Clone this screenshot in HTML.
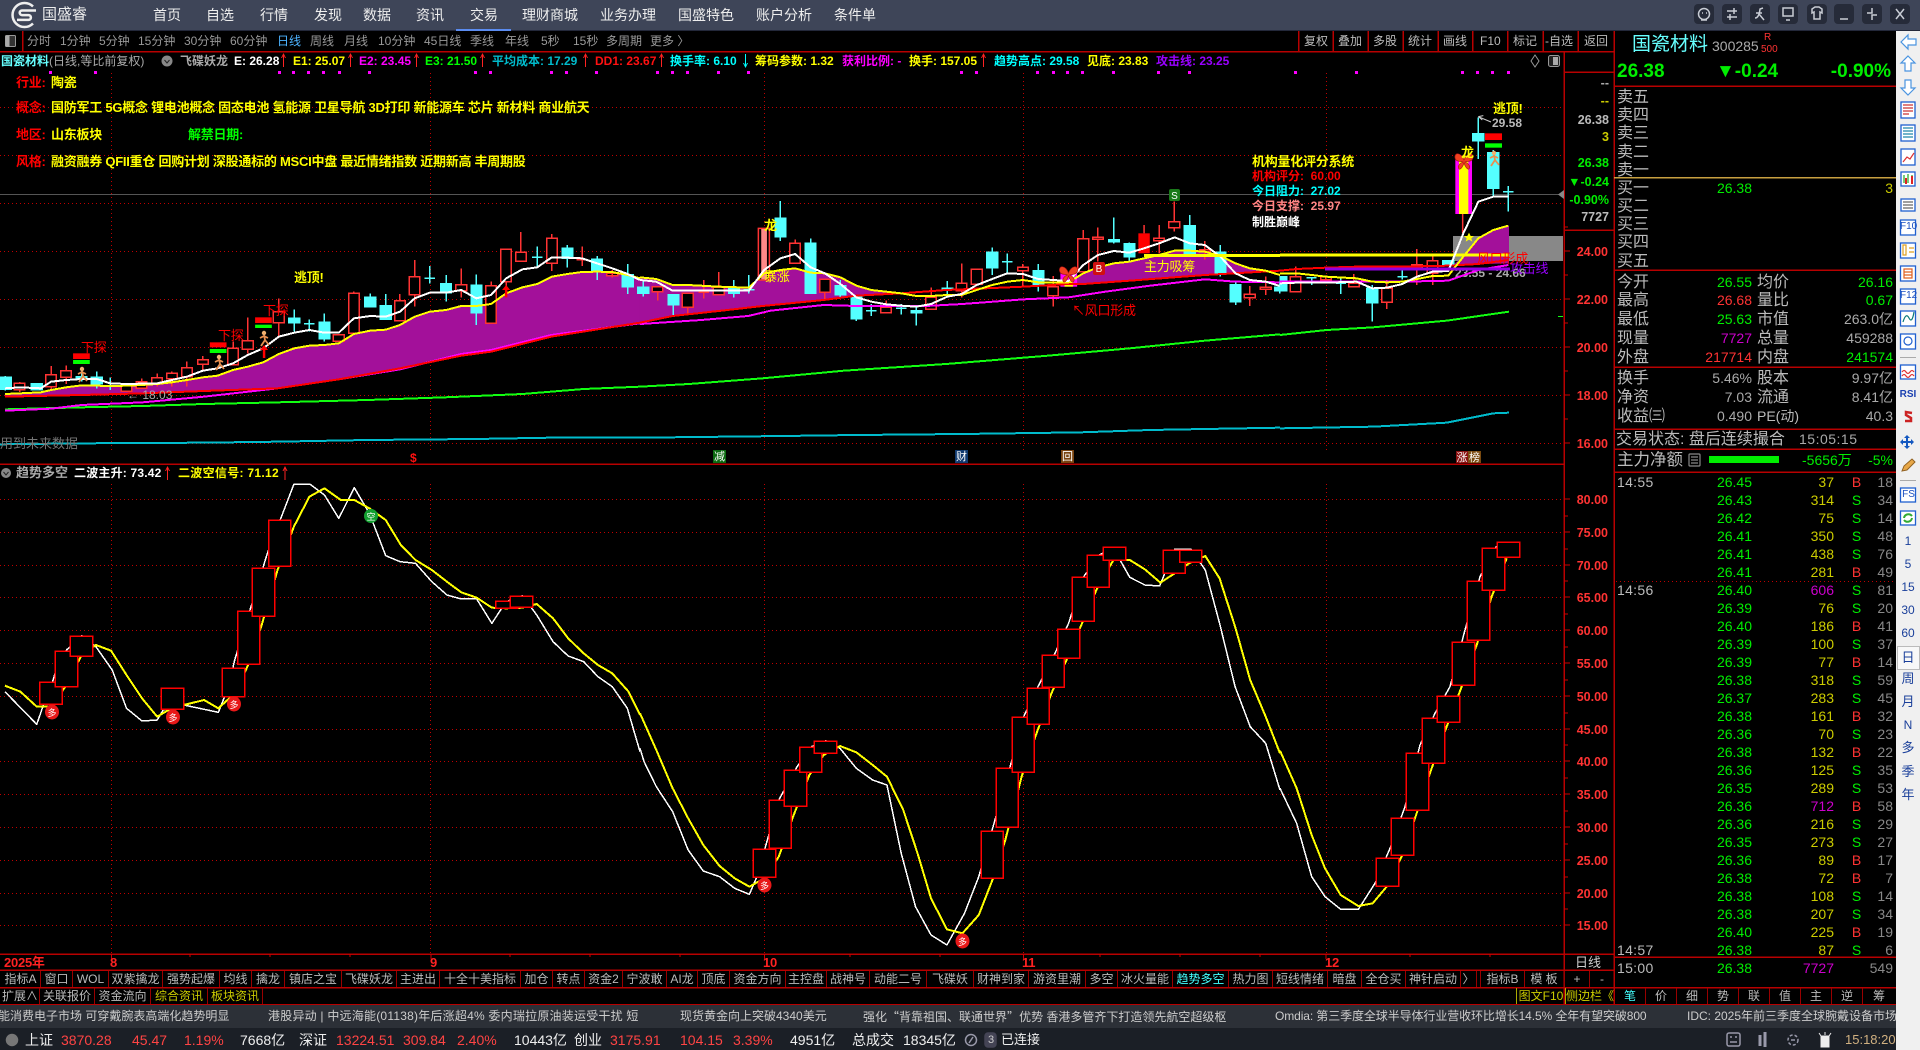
<!DOCTYPE html>
<html lang="zh-CN">
<head>
<meta charset="utf-8">
<title>国盛睿</title>
<style>
html,body{margin:0;padding:0;background:#000}
#p{position:relative;width:1920px;height:1050px;overflow:hidden;background:#000;font-family:"Liberation Sans","Noto Sans CJK SC",sans-serif;color:#bbb}
.a{position:absolute;white-space:nowrap;line-height:16px;height:16px}
.n{font-size:14px;color:#eee}
.k{font-size:12px;color:#999}
.y{font-size:12px;font-weight:bold}
.c{font-size:13px;font-weight:bold;letter-spacing:-.25px}
.c u{display:inline-block;width:35px;text-decoration:none}
.x{font-size:12.5px;font-weight:bold;color:#f33;text-align:right;right:311px}
.l{font-size:16px;color:#bbb}
.v{font-size:14px;text-align:right}
.tb{position:absolute;height:16px;line-height:16px;font-size:12px;color:#bbb;text-align:center;white-space:nowrap;font-weight:normal;overflow:hidden}
.g{font-size:14px}
svg#s{position:absolute;left:0;top:0}
svg#s .f *{vector-effect:non-scaling-stroke}
.R{fill:#000;stroke:#f33;stroke-width:1.5;shape-rendering:crispEdges}
.C{fill:#54ffff;stroke:#54ffff;stroke-width:1.5;shape-rendering:crispEdges}
.pl{fill:none;stroke-width:2;stroke-linejoin:round;shape-rendering:crispEdges}
.W{stroke:#fff}.Y{stroke:#ff0}.D{stroke:#f00}.M{stroke:#f0f}.G{stroke:#1f1}.T{stroke:#0bc}
.lw{stroke-width:1.5}
.bx{fill:#000;stroke:#f00;stroke-width:1.5;shape-rendering:crispEdges}
.col{position:absolute;line-height:18px;font-size:14px;white-space:pre;text-align:right}
.q{font-family:"Noto Sans CJK SC",sans-serif}
</style>
</head>
<body>
<div id="p">
<!-- title bar -->
<div style="position:absolute;left:0;top:0;width:1920px;height:30px;background:#3e4558"></div>
<div style="position:absolute;left:456px;top:29px;width:55px;height:2px;background:#5b8cf0"></div>
<div style="position:absolute;left:0;top:30px;width:456px;height:1px;background:#23283a"></div>
<div style="position:absolute;left:511px;top:30px;width:1409px;height:1px;background:#23283a"></div>

<svg id="s" width="1920" height="1050" viewBox="0 0 1920 1050">
 <!-- logo -->
 <path d="M33 6.500A12 12 0 1 0 33 23.500" fill="none" stroke="#eee" stroke-width="2.500"/>
 <path d="M36 10.500H22a2.300 2.300 0 0 0 0 4.600h6.500a2.400 2.400 0 0 1 0 4.800H17" fill="none" stroke="#eee" stroke-width="2.500"/>
 <!-- window buttons -->
 <g fill="#262b39">
  <rect x="1694" y="4" width="20" height="20" rx="4"/><rect x="1722" y="4" width="20" height="20" rx="4"/><rect x="1750" y="4" width="20" height="20" rx="4"/><rect x="1778" y="4" width="20" height="20" rx="4"/><rect x="1807" y="4" width="20" height="20" rx="4"/><rect x="1834" y="4" width="20" height="20" rx="4"/><rect x="1862" y="4" width="20" height="20" rx="4"/><rect x="1890" y="4" width="20" height="20" rx="4"/>
 </g>
 <g fill="none" stroke="#c8ccd4" stroke-width="1.500">
  <circle cx="1704" cy="14" r="5.500"/><path d="M1701 20h6M1702 13h1M1706 13h1"/>
  <path d="M1727 11h10M1727 17h10M1734 8v6M1730 14v6"/>
  <path d="M1755 18q4 0 5-9l3-1M1756 13h6M1759 14l5 6"/>
  <path d="M1783 8h10v8h-10zM1786 20h4"/>
  <path d="M1812 9l3-2h4l3 2v4l-2-1v7h-6v-7l-2 1z"/>
  <path d="M1840 19h8"/>
  <path d="M1872 8v5h-5M1872 20v-5h5"/>
  <path d="M1896 9l8 10M1904 9l-8 10"/>
 </g>

 <!-- main lines -->
 <g stroke="#b80000" stroke-width="1.500" fill="none" shape-rendering="crispEdges">
  <path d="M0 51.500H1614M0 464H1564M0 954H1614M0 970H1614M0 987.500H1896M0 1004.500H1896M1564 72H1614M1564 230H1614M1614 86H1896M1614 270H1896M1614 367H1896M1614 429H1896M1614 449H1896M1614 472H1896M1614 957H1896M1564 52V1004M1614 31V1004"/>
  <path d="M22.500 31V51"/>
  <path d="M1298.500 31V51M1333 31V51M1368 31V51M1403 31V51M1438 31V51M1472.500 31V51M1507.500 31V51M1543 31V51M1578 31V51"/>
 </g>
 <path d="M1614 177.500H1896" stroke="#c8a040" stroke-width="1.500" shape-rendering="crispEdges"/>
 <!-- axis ticks -->
 <path d="M1564 227h4M1564 251h6M1564 275h4M1564 299h6M1564 323h4M1564 347h6M1564 371h4M1564 395h6M1564 419h4M1564 443h6M1564 499h6M1564 516h4M1564 532h6M1564 549h4M1564 565h6M1564 581h4M1564 597h6M1564 614h4M1564 630h6M1564 647h4M1564 663h6M1564 680h4M1564 696h6M1564 713h4M1564 729h6M1564 745h4M1564 761h6M1564 778h4M1564 794h6M1564 811h4M1564 827h6M1564 844h4M1564 860h6M1564 877h4M1564 893h6M1564 909h4M1564 925h6" stroke="#c00" fill="none" shape-rendering="crispEdges"/>
 <path d="M111.500 954v5M431 954v5M764.500 954v5M1023.500 954v5M1326 954v5M190 954v3M270 954v3M350 954v3M510 954v3M590 954v3M680 954v3M850 954v3M940 954v3M1100 954v3M1180 954v3M1260 954v3M1410 954v3M1490 954v3" stroke="#c00" fill="none" shape-rendering="crispEdges"/>

 <!-- grid -->
 <g stroke="#c00000" fill="none" stroke-dasharray="1 3" shape-rendering="crispEdges">
  <path d="M0 107.500H1563M0 155.500H1563M0 203.500H1563M0 251.500H1563M0 299.500H1563M0 347.500H1563M0 395.500H1563M0 443.500H1563"/>
  <path d="M111.500 73V452M430.500 73V452M764.500 73V452M1023.500 73V452M1326.500 73V452"/>
  <path d="M0 499.500H1563M0 532.500H1563M0 565.500H1563M0 597.500H1563M0 630.500H1563M0 663.500H1563M0 696.500H1563M0 729.500H1563M0 761.500H1563M0 794.500H1563M0 827.500H1563M0 860.500H1563M0 893.500H1563M0 925.500H1563"/>
  <path d="M111.500 484V954M430.500 484V954M764.500 484V954M1023.500 484V954M1326.500 484V954"/>
  <path d="M1616 581.500H1895"/>
 </g>
 <path d="M0 194.500H1560" stroke="#555" stroke-width="1.200" shape-rendering="crispEdges"/>
 <path d="M1564 190l-6 4.500 6 4.500z" fill="#888"/>
 <path d="M1558 316.500h5" stroke="#1f1"/>
 <!-- legend arrows -->
 <g fill="none" stroke-width="1" shape-rendering="crispEdges">
  <path stroke="#f22" d="M283.500 54V67M281.500 58L283.500 54L285.500 58M350.500 54V67M348.500 58L350.500 54L352.500 58M416.500 54V67M414.500 58L416.500 54L418.500 58M482.500 54V67M480.500 58L482.500 54L484.500 58M585.500 54V67M583.500 58L585.500 54L587.500 58M661.500 54V67M659.500 58L661.500 54L663.500 58M983.500 54V67M981.500 58L983.500 54L985.500 58M167.500 467V480M165.500 471L167.500 467L169.500 471M285 467V480M283 471L285 467L287 471"/>
  <path stroke="#0ff" d="M745.500 54V67M743.500 63L745.500 67L747.500 63"/>
 </g>
 <!-- magenta dots -->
 <path d="M49 71h3v3h-3zM94 71h3v3h-3zM278 71h3v3h-3zM292 71h3v3h-3zM307 71h3v3h-3zM322 71h3v3h-3zM338 71h3v3h-3zM368 71h3v3h-3zM474 71h3v3h-3zM489 71h3v3h-3zM550 71h3v3h-3zM565 71h3v3h-3zM595 71h3v3h-3zM656 71h3v3h-3zM671 71h3v3h-3zM686 71h3v3h-3zM717 71h3v3h-3zM747 71h3v3h-3zM960 71h3v3h-3zM975 71h3v3h-3zM1036 71h3v3h-3zM1052 71h3v3h-3zM1066 71h3v3h-3zM1081 71h3v3h-3zM1112 71h3v3h-3zM1157 71h3v3h-3zM1188 71h3v3h-3zM1294 71h3v3h-3zM1355 71h3v3h-3zM1461 71h3v3h-3zM1476 71h3v3h-3zM1491 71h3v3h-3zM1507 71h3v3h-3z" fill="#f0f"/>

 <!-- gray box -->
 <rect x="1453" y="236" width="110" height="25" fill="#888"/>
 <text x="1455" y="277" font-size="12" font-weight="bold" fill="#aaa">23.55 - 24.66</text>

 <!-- TOP frame 1 -->
 <g class="f" transform="translate(0,180) scale(.40816,.33333)">
  <polygon fill="#a3109a" points="12,642 50,640 100,637 125,630 162,622 200,616 237,617 270,618 310,617 347,615 385,612 421,607 458,600 497,592 533,587 571,570 607,560 645,547 683,522 721,505 758,497 795,495 830,490 867,462 907,452 945,449 980,435 1016,410 1053,395 1093,390 1130,378 1167,378 1203,372 1240,340 1280,322 1316,312 1352,290 1390,282 1426,276 1463,275 1500,276 1538,285 1568,295 1568,428 1350,470 1203,515 1130,527 980,565 830,598 680,625 500,633 350,640 200,645 12,650"/>
  <path class="C" d="M13 588V592M13 628V632M0 592H27V628H0Z M90 612V612M90 630V632M77 612H103V630H77Z M200 570V590M200 593V605M187 590H213V593H187Z M237 574V592M237 612V625M224 592H250V612H224Z M270 592V630 M721 388V415M721 428V455M708 415H734V428H708Z M758 418V455M745 432H771 M795 400V427M795 477V485M782 427H808V477H782Z M907 340V352M894 352H920V380H894Z M945 342V378M945 418V420M932 378H958V418H932Z M1053 258V310M1040 295H1066 M1093 285V312M1093 338V365M1080 312H1106V338H1080Z M1167 283V316M1167 398V435M1154 316H1180V398H1154Z M1316 200V260M1303 232H1329 M1390 195V205M1390 235V263M1377 205H1403V235H1377Z M1463 228V238M1463 275V300M1450 238H1476V275H1450Z M1538 252V285M1538 320V342M1525 285H1551V320H1525Z"/>
  <path class="R" d="M48 606V610M48 630V636M35 610H61V630H35Z M125 558V584M125 620V630M112 584H138V620H112Z M162 556V572M162 592V612M149 572H175V592H149Z M310 618V618M297 618H323V634H297Z M347 595V605M334 605H360V625H334Z M385 580V593M385 610V620M372 593H398V610H372Z M421 575V580M421 597V620M408 580H434V597H408Z M458 545V563M458 590V620M445 563H471V590H445Z M497 528V540M497 553V570M484 540H510V553H484Z M571 485V505M558 505H584V555H558Z M607 412V482M607 508V520M594 482H620V508H594Z M683 355V395M683 428V470M670 395H696V428H670Z M830 464V464M817 464H843V484H817Z M867 334V340M854 340H880V460H854Z M980 342V362M967 362H993V422H967Z M1016 240V290M1016 345V380M1003 290H1029V345H1003Z M1130 265V314M1130 332V352M1117 314H1143V332H1117Z M1203 305V317M1190 317H1216V430H1190Z M1240 205V208M1240 305V350M1227 208H1253V305H1227Z M1276 156V217M1263 217H1289V244H1263Z M1352 162V175M1352 250V273M1339 175H1365V250H1339Z M1426 200V258M1413 240H1439 M1500 270V292M1487 280H1513V287H1487Z"/>
  <polyline class="pl T" points="0,793 200,790 500,788 680,785 900,780 1165,777 1350,773 1568,773"/>
  <polyline class="pl G" points="12,688 200,682 350,678 500,672 680,667 900,660 1090,652 1280,642 1430,627 1568,620"/>
  <polyline class="pl M" points="12,692 125,686 200,675 350,667 500,650 680,625 830,598 980,568 1130,522 1203,510 1350,465 1568,430"/>
  <polyline class="pl D" points="12,650 200,645 350,640 500,633 680,625 830,598 980,565 1130,527 1203,515 1350,470 1568,428"/>
  <polyline class="pl Y" points="12,642 50,640 100,637 125,630 162,622 200,616 237,617 270,618 310,617 347,615 385,612 421,607 458,600 497,592 533,587 571,570 607,560 645,547 683,522 721,505 758,497 795,495 830,490 867,462 907,452 945,449 980,435 1016,410 1053,395 1093,390 1130,378 1167,378 1203,372 1240,340 1280,322 1316,312 1352,290 1390,282 1426,276 1463,275 1500,276 1538,285 1568,295"/>
  <polyline class="pl W" points="12,625 50,622 100,625 125,605 162,600 200,597 237,597 270,610 310,612 347,611 385,610 421,600 458,590 497,572 533,565 571,550 607,525 645,505 683,470 721,458 758,450 795,458 830,458 867,415 907,408 945,410 980,395 1016,355 1053,338 1093,338 1130,330 1167,355 1203,345 1240,295 1280,268 1316,262 1352,232 1390,233 1426,235 1463,250 1500,265 1538,282 1568,300"/>
  <g fill="#f00"><rect x="179" y="520" width="41" height="17"/><rect x="514" y="487" width="41" height="15"/><rect x="625" y="412" width="41" height="17"/></g>
  <g fill="#0f0"><rect x="179" y="540" width="41" height="12"/><rect x="514" y="507" width="41" height="12"/><rect x="625" y="434" width="41" height="10"/></g>
  <path d="M647 495l-10 15h7v24h6v-24h7zM1240 315l-10 15h7v22h6v-22h7z" fill="#f00"/>
 </g>

 <!-- TOP frame 2 -->
 <g class="f" transform="translate(640,180) scale(.40816,.33333)">
  <polygon fill="#a3109a" points="0,292 40,297 80,315 117,315 193,320 267,323 304,280 344,270 380,265 418,278 453,280 491,292 530,317 567,330 603,335 640,340 530,347 450,360 300,378 200,392 80,408 0,428"/>
  <polygon fill="#a3109a" points="1070,290 1086,280 1122,262 1161,250 1199,245 1235,235 1272,225 1310,212 1347,212 1384,215 1422,228 1459,250 1494,265 1533,272 1540,274 1384,285 1200,302 1086,312 1070,312"/>
  <path class="C" d="M8 300V322M8 340V350M-5 322H21V340H-5Z M82 345V345M82 375V410M69 345H95V375H69Z M230 300V325M230 340V352M217 325H243V340H217Z M267 285V340M254 330H280 M344 63V115M344 170V183M331 115H357V170H331Z M418 175V190M418 340V342M405 190H431V340H405Z M491 300V318M491 345V352M478 318H504V345H478Z M530 352V352M530 417V423M517 352H543V417H517Z M567 372V408M554 392H580 M640 372V403M627 385H653 M677 380V392M677 398V437M664 392H690V398H664Z M753 303V325M753 330V345M740 325H766V330H740Z M863 202V217M863 263V285M850 217H876V263H850Z M900 220V280M887 245H913 M976 252V273M976 318V335M963 273H989V318H963Z M1161 112V180M1161 185V190M1148 180H1174V185H1148Z M1199 188V192M1199 230V248M1186 192H1212V230H1186Z M1347 105V138M1347 220V222M1334 138H1360V220H1334Z M1422 195V217M1422 280V290M1409 217H1435V280H1409Z M1459 308V315M1459 365V375M1446 315H1472V365H1446Z M1568 305V322M1568 332V340M1555 322H1581V332H1555Z"/>
  <path class="R" d="M43 320V320M43 335V362M30 320H56V335H30Z M117 340V340M117 382V402M104 340H130V382H104Z M156 300V355M143 337H169 M193 276V322M180 322H206V344H180Z M453 298V298M453 337V360M440 298H466V337H440Z M380 178V190M380 250V252M367 190H393V250H367Z M603 362V382M590 382H616V398H590Z M713 322V352M700 352H726V388H700Z M788 250V310M788 333V352M775 310H801V333H775Z M825 268V268M812 268H838V313H812Z M938 252V262M938 272V320M925 262H951V272H925Z M1012 288V320M1012 347V380M999 320H1025V347H999Z M1086 150V177M1073 177H1099V275H1073Z M1122 142V172M1122 178V245M1109 172H1135V178H1109Z M1272 135V175M1272 183V220M1259 175H1285V183H1259Z M1309 65V125M1309 143V155M1296 125H1322V143H1296Z M1384 183V210M1384 215V238M1371 210H1397V215H1371Z M1494 318V343M1494 353V378M1481 343H1507V353H1481Z M1533 290V322M1533 328V345M1520 322H1546V328H1520Z"/>
  <path d="M1235 135V160" stroke="#f33" stroke-width="1.500"/>
  <rect x="1221" y="160" width="28" height="60" fill="#f00"/>
  <rect x="290" y="145" width="27" height="155" fill="#000" stroke="#f33" stroke-width="1.500"/>
  <rect x="297" y="147" width="14" height="151" fill="#f88"/>
  <rect x="1030" y="280" width="41" height="40" fill="#f0f"/><rect x="1040" y="300" width="21" height="20" fill="#ff0"/>
  <polyline class="pl T" points="0,773 350,768 530,765 790,762 1080,757 1250,750 1384,747 1568,743"/>
  <polyline class="pl G" points="0,620 120,612 300,595 500,572 750,552 1000,527 1200,505 1384,482 1568,463"/>
  <polyline class="pl M" points="0,432 150,420 265,408 320,392 450,375 530,378 700,378 790,372 940,358 1050,352 1140,335 1250,317 1384,298 1458,305 1568,307"/>
  <polyline class="pl D" points="0,428 80,408 200,392 300,378 450,360 530,347 640,340 750,330 940,320 1050,312 1086,312 1200,302 1384,285 1568,272"/>
  <polyline class="pl Y" points="0,292 40,297 80,315 117,315 193,320 267,323 304,280 344,270 380,265 418,278 453,280 491,292 530,317 567,330 603,335 640,340 677,348 713,348 753,345 788,345 825,330 863,315 900,305 938,300 976,307 1012,307 1050,307 1086,280 1122,262 1161,250 1199,245 1235,235 1272,225 1310,212 1347,212 1384,215 1422,228 1459,250 1494,265 1533,272 1568,285"/>
  <polyline class="pl W" points="0,300 40,305 80,332 117,332 193,332 267,332 304,270 344,235 380,222 418,262 453,280 491,312 530,352 567,365 603,373 640,377 677,380 713,372 753,350 788,342 825,315 863,297 900,280 938,282 976,297 1012,300 1050,303 1086,255 1122,225 1161,213 1199,218 1235,205 1272,190 1310,172 1347,190 1384,195 1422,230 1459,280 1494,300 1533,305 1568,318"/>
  <path d="M1235 226H1568" stroke="#ff0" stroke-width="3" fill="none" shape-rendering="crispEdges"/>
 </g>

 <!-- TOP frame 3 -->
 <g class="f" transform="translate(1280,100) scale(.33333,.33333)">
  <polygon fill="#a3109a" points="519,495 550,470 595,415 640,390 687,377 687,490 595,492"/>
  <path class="C" d="M0 530H20V572H0Z M95 532V555M80 534H110 M183 530V582M168 550H198 M277 555V565M277 608V665M261 565H293V608H261Z M367 510V538M352 530H382 M505 483V500M489 483H521V498H489Z M595 52V102M595 122V177M579 102H611V122H579Z M640 150V158M640 265V290M624 158H656V265H624Z M685 258V335M669 276H701"/>
  <path class="R" d="M47 500V530M47 575V578M31 530H63V575H31Z M138 530V545M122 530H154V540H122Z M222 522V550M222 560V562M206 550H238V560H206Z M321 540V565M321 607V627M305 565H337V607H305Z M411 447V495M411 503V555M395 495H427V503H395Z M458 470V483M458 520V555M442 483H474V520H442Z"/>
  <path d="M548 342V400" stroke="#f33" stroke-width="1.500"/>
  <rect x="526" y="167" width="50" height="175" fill="#f0f"/><rect x="537" y="167" width="28" height="175" fill="#ff0"/>
  <polyline class="pl T" points="0,985 280,980 500,968 640,940 687,938"/>
  <polyline class="pl G" points="0,705 140,690 280,682 500,662 687,635"/>
  <polyline class="pl M" points="0,545 367,545 505,542 595,510 685,495"/>
  <polyline class="pl D" points="0,512 50,507 138,503 230,500 367,500 505,497 595,492 685,480"/>
  <path d="M0 465H687" stroke="#ff0" stroke-width="3" fill="none" shape-rendering="crispEdges"/>
  <polyline class="pl Y" points="0,520 50,520 95,525 138,530 230,535 277,545 321,547 367,545 411,537 458,528 505,527 550,470 595,415 640,390 685,377"/>
  <polyline class="pl W" points="0,550 50,548 95,548 138,548 230,545 277,565 321,563 367,552 411,530 458,515 505,513 550,400 595,305 640,290 685,290"/>
  <path d="M135 507H690" stroke="#9000e0" stroke-width="3" fill="none" shape-rendering="crispEdges"/>
  <rect x="615" y="100" width="51" height="20" fill="#f00"/><rect x="615" y="130" width="51" height="13" fill="#0f0"/>
  <path d="M595 50l38 16M595 50l12 10M595 50l15-3" stroke="#ccc" fill="none" stroke-width="1"/>
  <path d="M567 398l5 10h10l-8 7 3 10-10-6-10 6 3-10-8-7h10z" fill="#ff0"/>
 </g>

 <!-- Runner icons -->
 <defs><g id="rn"><circle cx="0" cy="-6" r="2.200" fill="#f0b070"/><path d="M0-4L1 1M-4-1L0-3L4-1M1 1L-3 7M1 1L5 6" stroke="#e89050" stroke-width="1.800" fill="none"/></g>
 <g id="bf"><path d="M0 0C-3-8-10-8-9-2C-8 2-4 1-1 2C-4 3-7 6-5 9C-3 10-1 6 0 3C1 6 3 10 5 9C7 6 4 3 1 2C4 1 8 2 9-2C10-8 3-8 0 0Z" fill="#f04020" stroke="#a01010" stroke-width=".6"/></g></defs>
 <use href="#rn" x="82" y="375"/><use href="#rn" x="219" y="363"/><use href="#rn" x="264" y="339"/><use href="#rn" x="1494" y="159"/>
 <use href="#bf" x="1068.500" y="273"/><use href="#bf" x="1464" y="160"/>

 <!-- LOWER frames -->
 <g class="f" transform="translate(0,460) scale(.40816,.33333)">
  <polyline class="pl W lw" points="12,695 90,793 105,740 125,680 135,640 163,570 200,527 235,560 275,630 310,745 348,783 385,780 400,750 450,735 535,757 560,680 575,600 620,420 655,280 720,73 760,73 795,105 830,175 868,83 905,160 945,287 980,305 1018,310 1058,365 1095,405 1130,417 1168,417 1205,490 1240,425 1280,407 1315,465 1355,545 1392,588 1430,605 1465,650 1500,680 1537,745 1568,875"/>
  <polyline class="pl Y" points="12,677 50,695 90,740 125,740 160,680 200,585 235,555 272,572 310,645 348,715 385,770 420,745 460,732 500,720 535,745 575,700 610,610 640,500 680,330 720,200 758,110 795,85 835,120 868,120 905,145 945,180 982,255 1018,300 1058,330 1095,365 1130,397 1168,413 1205,443 1240,445 1280,443 1315,432 1355,475 1392,535 1430,580 1465,615 1500,640 1540,695 1568,765"/>
  <rect class="bx" x="98" y="667" width="55" height="66"/><rect class="bx" x="135" y="574" width="55" height="106"/><rect class="bx" x="172" y="529" width="55" height="60"/><rect class="bx" x="395" y="685" width="55" height="63"/><rect class="bx" x="545" y="625" width="55" height="85"/><rect class="bx" x="582" y="454" width="55" height="159"/><rect class="bx" x="618" y="325" width="55" height="144"/><rect class="bx" x="658" y="181" width="54" height="138"/><rect class="bx" x="1214" y="424" width="54" height="21"/><rect class="bx" x="1250" y="409" width="55" height="33"/>
 </g>
 <g class="f" transform="translate(640,460) scale(.40816,.33333)">
  <polyline class="pl W lw" points="0,865 10,905 40,980 80,1055 118,1170 155,1233 195,1250 232,1285 268,1303 290,1240 305,1170 340,1020 385,920 420,860 455,842 490,865 530,925 570,960 605,975 640,1180 675,1340 713,1425 752,1455 795,1360 830,1250 865,1100 900,950 940,770 975,680 1013,590 1050,490 1087,350 1125,285 1160,265 1200,352 1237,375 1273,378 1310,268 1350,268 1385,330 1420,490 1458,680 1495,800 1533,850 1568,990"/>
  <polyline class="pl Y" points="0,760 40,870 80,985 118,1075 155,1155 195,1218 232,1255 268,1280 305,1255 340,1190 375,1070 415,945 450,885 490,858 530,877 570,915 605,950 645,1050 680,1180 713,1315 752,1408 790,1420 830,1365 865,1255 895,1140 935,950 970,825 1008,700 1045,600 1083,490 1120,385 1160,300 1200,300 1237,328 1275,368 1310,340 1345,310 1385,288 1420,355 1458,500 1495,660 1533,770 1568,880"/>
  <rect class="bx" x="278" y="1168" width="54" height="84"/><rect class="bx" x="317" y="1021" width="54" height="144"/><rect class="bx" x="354" y="931" width="54" height="108"/><rect class="bx" x="391" y="862" width="54" height="75"/><rect class="bx" x="427" y="844" width="55" height="36"/><rect class="bx" x="836" y="1114" width="54" height="141"/><rect class="bx" x="873" y="925" width="54" height="177"/><rect class="bx" x="912" y="772" width="54" height="165"/><rect class="bx" x="949" y="685" width="54" height="108"/><rect class="bx" x="986" y="586" width="54" height="96"/><rect class="bx" x="1023" y="508" width="54" height="87"/><rect class="bx" x="1059" y="352" width="54" height="132"/><rect class="bx" x="1096" y="286" width="54" height="96"/><rect class="bx" x="1135" y="262" width="55" height="39"/><rect class="bx" x="1282" y="271" width="54" height="69"/><rect class="bx" x="1322" y="271" width="54" height="36"/>
 </g>
 <g class="f" transform="translate(1280,460) scale(.33333,.33333)">
  <polyline class="pl W lw" points="0,985 50,1090 95,1250 135,1310 182,1348 235,1348 285,1270 330,1165 375,1040 420,855 465,760 510,680 555,510 600,350 650,258"/>
  <polyline class="pl Y" points="0,872 50,985 95,1125 135,1225 182,1305 235,1338 278,1330 320,1280 365,1190 410,1060 455,925 500,800 545,680 590,555 635,410 680,295"/>
  <rect class="bx" x="289" y="1195" width="67" height="84"/><rect class="bx" x="334" y="1075" width="67" height="111"/><rect class="bx" x="379" y="880" width="67" height="171"/><rect class="bx" x="427" y="775" width="67" height="135"/><rect class="bx" x="472" y="709" width="67" height="78"/><rect class="bx" x="517" y="547" width="67" height="129"/><rect class="bx" x="562" y="364" width="67" height="177"/><rect class="bx" x="607" y="265" width="67" height="126"/><rect class="bx" x="652" y="247" width="67" height="45"/>
 </g>

 <!-- signal markers -->
 <g font-size="9" fill="#fff" text-anchor="middle" font-family="'Liberation Sans','Noto Sans CJK SC',sans-serif">
  <ellipse cx="52" cy="712" rx="7" ry="7.500" fill="#e81818"/><text x="52" y="716">多</text>
  <ellipse cx="173" cy="717" rx="7" ry="7.500" fill="#e81818"/><text x="173" y="721">多</text>
  <ellipse cx="234" cy="704" rx="7" ry="7.500" fill="#e81818"/><text x="234" y="708">多</text>
  <ellipse cx="764.500" cy="885" rx="7" ry="7.500" fill="#e81818"/><text x="764.500" y="889">多</text>
  <ellipse cx="962.500" cy="941" rx="7" ry="7.500" fill="#e81818"/><text x="962.500" y="945">多</text>
  <ellipse cx="371" cy="516" rx="7" ry="7" fill="#12a030"/><text x="371" y="520">空</text>
  <rect x="1093" y="262" width="12" height="13" rx="2" fill="#d01010"/><text x="1099" y="272" font-size="10">B</text>
  <rect x="1169" y="189" width="11" height="12" rx="2" fill="#1a7a1a"/><text x="1174.500" y="199" font-size="10">S</text>
  <rect x="713" y="450" width="13" height="13" fill="#0a6a10"/><text x="719.500" y="460" font-size="11">减</text>
  <rect x="955" y="450" width="13" height="13" fill="#103a70"/><text x="961.500" y="460" font-size="11">财</text>
  <rect x="1061" y="450" width="13" height="13" fill="#7a4410"/><text x="1067.500" y="460" font-size="11">回</text>
  <rect x="1456" y="451" width="12" height="12" fill="#8a1010"/><text x="1462" y="461" font-size="11">涨</text>
  <rect x="1468" y="451" width="13" height="12" fill="#7a4a10"/><text x="1474.500" y="461" font-size="11">榜</text>
 </g>

 <!-- small panel bar -->
 <rect x="1709" y="456" width="70" height="7" fill="#0e0"/>
 <g fill="none" stroke="#888" stroke-width="1.200"><rect x="1689" y="454" width="11" height="12" rx="1"/><path d="M1691 457h7M1691 460h7M1691 463h7"/></g>
 <!-- toolbar icon -->
 <rect x="5.500" y="35.500" width="10" height="11" rx="1" fill="#333" stroke="#999"/>
 <rect x="5.500" y="35.500" width="4" height="11" fill="#aaa"/>
 <!-- legend icons -->
 <circle cx="167" cy="61" r="5.500" fill="#888"/><path d="M164.500 60l2.500 3 2.500-3" stroke="#222" fill="none"/>
 <circle cx="6" cy="473" r="5" fill="#888"/><path d="M3.500 472l2.500 3 2.500-3" stroke="#222" fill="none"/>
 <path d="M1535 55l4 6-4 6-4-6z" fill="none" stroke="#999"/>
 <rect x="1548.500" y="55.500" width="11" height="11" rx="2" fill="#222" stroke="#999"/><rect x="1553" y="57" width="5" height="8" fill="#aaa"/>

 <!-- side bar -->
 <rect x="1896" y="31" width="24" height="1019" fill="#f0f0f0"/>
 <g fill="#fff" stroke="#4a94e0" stroke-width="1.200">
  <path d="M1901 42l7-7v4h8v6h-8v4z"/>
  <path d="M1908 56l7 7h-4v8h-6v-8h-4z"/>
  <path d="M1908 95l7-7h-4v-8h-6v8h-4z"/>
 </g>
 <g fill="#fff" stroke="#2060d0" stroke-width="1.300">
  <rect x="1901" y="102" width="14" height="16"/>
  <rect x="1901" y="125" width="14" height="16"/>
  <rect x="1901" y="149" width="14" height="16"/>
  <rect x="1901" y="172" width="14" height="14"/>
  <rect x="1901" y="199" width="14" height="12"/>
  <rect x="1900.500" y="220" width="15" height="15"/>
  <rect x="1900.500" y="243" width="15" height="15"/>
  <rect x="1900.500" y="266" width="15" height="15"/>
  <rect x="1900.500" y="289" width="15" height="15"/>
  <rect x="1900.500" y="311" width="15" height="15"/>
  <rect x="1900.500" y="334" width="15" height="15"/>
  <rect x="1900.500" y="365" width="15" height="14"/>
  <rect x="1900.500" y="488" width="15" height="14"/>
  <rect x="1900.500" y="511" width="15" height="14" />
 </g>
 <g fill="none" stroke-width="1.200">
  <path d="M1903 105h10M1903 108h10M1903 111h10M1903 114h6" stroke="#c33"/>
  <path d="M1903 128h10M1903 131h10M1903 134h10M1903 137h10" stroke="#28a"/>
  <path d="M1903 162l4-5 3 2 4-6" stroke="#d33"/>
  <path d="M1904 175v8M1908 174v9M1912 175v8" stroke="#2a2"/>
  <path d="M1903 202h10M1903 205h10M1903 208h10" stroke="#666"/>
  <path d="M1903 245h3v10h-3zM1909 248h5M1909 252h5" stroke="#e0a020"/>
  <path d="M1904 269h8v9h-8zM1904 272h8M1904 275h8" stroke="#e06020"/>
  <path d="M1903 322q3-10 6-4t5-6" stroke="#0a7a7a"/>
  <circle cx="1908" cy="341" r="4" stroke="#2060d0"/>
  <path d="M1902 372q2-3 4 0t4 0 4 0M1902 376q2-3 4 0t4 0 4 0" stroke="#d33"/>
  <path d="M1904 518a4.500 4.500 0 0 1 8-2M1912 518a4.500 4.500 0 0 1-8 2" stroke="#3a3" stroke-width="2"/>
 </g>
 <path d="M1905 178h2v6h-2zM1911 176h2v8h-2z" fill="#d22"/>
 <path d="M1900 357.500h16M1900 480.500h16" stroke="#aaa"/>
 <path d="M1912 413l-6-1 0 3 5 3-0 3-6 0" stroke="#c22" stroke-width="2.500" fill="none"/>
 <path d="M1908 442m-8 0l3-3v2h3v-3h-2l3-3 3 3h-2v3h3v-2l3 3-3 3v-2h-3v3h2l-3 3-3-3h2v-3h-3v2z" fill="#1458c0"/>
 <path d="M1902 471l2-5 8-7 3 3-8 8z" fill="#e8a848" stroke="#906020"/>
 <rect x="1897.500" y="646.500" width="22" height="23" fill="#f8f8f8" stroke="#bbb"/>
</svg>

<!-- logo and nav -->
<div class="a" style="left:42px;top:7px;font-size:15px;color:#eee">国盛睿</div>
<div class="a n" style="left:153px;top:7px">首页</div>
<div class="a n" style="left:206px;top:7px">自选</div>
<div class="a n" style="left:260px;top:7px">行情</div>
<div class="a n" style="left:314px;top:7px">发现</div>
<div class="a n" style="left:363px;top:7px">数据</div>
<div class="a n" style="left:416px;top:7px">资讯</div>
<div class="a n" style="left:470px;top:7px">交易</div>
<div class="a n" style="left:522px;top:7px">理财商城</div>
<div class="a n" style="left:600px;top:7px">业务办理</div>
<div class="a n" style="left:678px;top:7px">国盛特色</div>
<div class="a n" style="left:756px;top:7px">账户分析</div>
<div class="a n" style="left:834px;top:7px">条件单</div>

<!-- toolbar -->
<div class="a k" style="left:27px;top:33px">分时</div>
<div class="a k" style="left:60px;top:33px">1分钟</div>
<div class="a k" style="left:99px;top:33px">5分钟</div>
<div class="a k" style="left:138px;top:33px">15分钟</div>
<div class="a k" style="left:184px;top:33px">30分钟</div>
<div class="a k" style="left:230px;top:33px">60分钟</div>
<div class="a k" style="left:277px;top:33px;color:#4db3ff">日线</div>
<div class="a k" style="left:310px;top:33px">周线</div>
<div class="a k" style="left:344px;top:33px">月线</div>
<div class="a k" style="left:378px;top:33px">10分钟</div>
<div class="a k" style="left:424px;top:33px">45日线</div>
<div class="a k" style="left:470px;top:33px">季线</div>
<div class="a k" style="left:505px;top:33px">年线</div>
<div class="a k" style="left:541px;top:33px">5秒</div>
<div class="a k" style="left:573px;top:33px">15秒</div>
<div class="a k" style="left:606px;top:33px">多周期</div>
<div class="a k" style="left:650px;top:33px">更多 〉</div>
<div class="a k" style="left:1304px;top:33px;color:#bbb">复权</div>
<div class="a k" style="left:1338px;top:33px;color:#bbb">叠加</div>
<div class="a k" style="left:1373px;top:33px;color:#bbb">多股</div>
<div class="a k" style="left:1408px;top:33px;color:#bbb">统计</div>
<div class="a k" style="left:1443px;top:33px;color:#bbb">画线</div>
<div class="a k" style="left:1480px;top:33px;color:#bbb">F10</div>
<div class="a k" style="left:1513px;top:33px;color:#bbb">标记</div>
<div class="a k" style="left:1545px;top:33px;color:#bbb">-自选</div>
<div class="a k" style="left:1584px;top:33px;color:#bbb">返回</div>

<!-- legend -->
<div class="a y" style="left:1px;top:53px;color:#6ff">国瓷材料<span style="color:#aaa;font-weight:normal">(日线,等比前复权)</span></div>
<div class="a y" style="left:180px;top:53px;color:#aaa">飞碟妖龙</div>
<div class="a y" style="left:234px;top:53px;color:#fff">E: 26.28</div>
<div class="a y" style="left:293px;top:53px;color:#ff0">E1: 25.07</div>
<div class="a y" style="left:359px;top:53px;color:#f0f">E2: 23.45</div>
<div class="a y" style="left:425px;top:53px;color:#0f0">E3: 21.50</div>
<div class="a y" style="left:492px;top:53px;color:#0bc">平均成本: 17.29</div>
<div class="a y" style="left:595px;top:53px;color:#f11">DD1: 23.67</div>
<div class="a y" style="left:670px;top:53px;color:#0ff">换手率: 6.10</div>
<div class="a y" style="left:755px;top:53px;color:#ff0">筹码参数: 1.32</div>
<div class="a y" style="left:842px;top:53px;color:#f0f">获利比例: -</div>
<div class="a y" style="left:909px;top:53px;color:#ff0">换手: 157.05</div>
<div class="a y" style="left:994px;top:53px;color:#0ff">趋势高点: 29.58</div>
<div class="a y" style="left:1087px;top:53px;color:#ff0">见底: 23.83</div>
<div class="a y" style="left:1156px;top:53px;color:#90f">攻击线: 23.25</div>

<!-- concept block -->
<div class="a c" style="left:16px;top:75px;color:#f00"><u>行业:</u><span style="color:#ff0">陶瓷</span></div>
<div class="a c" style="left:16px;top:100px;color:#f00"><u>概念:</u><span style="color:#ff0">国防军工 5G概念 锂电池概念 固态电池 氢能源 卫星导航 3D打印 新能源车 芯片 新材料 商业航天</span></div>
<div class="a c" style="left:16px;top:127px;color:#f00"><u>地区:</u><span style="color:#ff0">山东板块</span></div>
<div class="a c" style="left:188px;top:127px;color:#0f0">解禁日期:</div>
<div class="a c" style="left:16px;top:154px;color:#f00"><u>风格:</u><span style="color:#ff0">融资融券 QFII重仓 回购计划 深股通标的 MSCI中盘 最近情绪指数 近期新高 丰周期股</span></div>

<!-- chart labels -->
<div class="a c" style="left:294px;top:270px;color:#ff0">逃顶!</div>
<div class="a c" style="left:81px;top:340px;color:#f00;font-weight:normal">下探</div>
<div class="a c" style="left:218px;top:328px;color:#f00;font-weight:normal">下探</div>
<div class="a c" style="left:263px;top:303px;color:#f00;font-weight:normal">下探</div>
<div class="a" style="left:127px;top:387px;font-size:12px;color:#aaa">← 18.03</div>
<div class="a" style="left:0;top:436px;font-size:13px;color:#777">用到未来数据</div>
<div class="a" style="left:410px;top:450px;font-size:12px;color:#f11;font-weight:bold">$</div>
<div class="a c" style="left:764px;top:218px;color:#ff0">龙</div>
<div class="a c" style="left:764px;top:269px;color:#ff0;font-weight:normal">暴涨</div>
<div class="a c" style="left:1144px;top:259px;color:#ff0;font-weight:normal">主力吸筹</div>
<div class="a c" style="left:1072px;top:303px;color:#f00;font-weight:normal">↖风口形成</div>
<div class="a c" style="left:1252px;top:154px;color:#ff0">机构量化评分系统</div>
<div class="a" style="left:1252px;top:168px;font-size:12px;color:#f00;font-weight:bold">机构评分:&nbsp; 60.00</div>
<div class="a" style="left:1252px;top:183px;font-size:12px;color:#0ff;font-weight:bold">今日阻力:&nbsp; 27.02</div>
<div class="a" style="left:1252px;top:198px;font-size:12px;color:#f88;font-weight:bold">今日支撑:&nbsp; 25.97</div>
<div class="a" style="left:1252px;top:214px;font-size:12px;color:#fff;font-weight:bold">制胜巅峰</div>
<div class="a c" style="left:1493px;top:101px;color:#ff0">逃顶!</div>
<div class="a" style="left:1492px;top:115px;font-size:12px;color:#bbb;font-weight:bold">29.58</div>
<div class="a c" style="left:1461px;top:145px;color:#ff0">龙</div>
<div class="a c" style="left:1477px;top:251px;color:#f00;font-weight:normal">风口形成</div>
<div class="a c" style="left:1510px;top:261px;color:#90f;font-weight:normal">攻击线</div>

<!-- lower legend -->
<div class="a" style="left:16px;top:465px;font-size:13px;color:#aaa;font-weight:bold">趋势多空</div>
<div class="a" style="left:74px;top:465px;font-size:12px;color:#fff;font-weight:bold;letter-spacing:.2px">二波主升: 73.42</div>
<div class="a y" style="left:178px;top:465px;color:#ff0;letter-spacing:.3px">二波空信号: 71.12</div>

<!-- axis -->
<div class="a x" style="top:75px;color:#aaa">--</div>
<div class="a x" style="top:93px;color:#cc0">--</div>
<div class="a x" style="top:112px;color:#bbb">26.38</div>
<div class="a x" style="top:129px;color:#cc0">3</div>
<div class="a x" style="top:155px;color:#0e0">26.38</div>
<div class="a x" style="top:174px;color:#0e0">▼-0.24</div>
<div class="a x" style="top:192px;color:#0e0">-0.90%</div>
<div class="a x" style="top:209px;color:#bbb">7727</div>
<div class="a x" style="top:244px;right:312px">24.00</div>
<div class="a x" style="top:292px;right:312px">22.00</div>
<div class="a x" style="top:340px;right:312px">20.00</div>
<div class="a x" style="top:388px;right:312px">18.00</div>
<div class="a x" style="top:436px;right:312px">16.00</div>
<div class="a x" style="top:492px;right:312px">80.00</div>
<div class="a x" style="top:525px;right:312px">75.00</div>
<div class="a x" style="top:558px;right:312px">70.00</div>
<div class="a x" style="top:590px;right:312px">65.00</div>
<div class="a x" style="top:623px;right:312px">60.00</div>
<div class="a x" style="top:656px;right:312px">55.00</div>
<div class="a x" style="top:689px;right:312px">50.00</div>
<div class="a x" style="top:722px;right:312px">45.00</div>
<div class="a x" style="top:754px;right:312px">40.00</div>
<div class="a x" style="top:787px;right:312px">35.00</div>
<div class="a x" style="top:820px;right:312px">30.00</div>
<div class="a x" style="top:853px;right:312px">25.00</div>
<div class="a x" style="top:886px;right:312px">20.00</div>
<div class="a x" style="top:918px;right:312px">15.00</div>

<!-- date row -->
<div class="a c" style="left:4px;top:955px;color:#f22">2025年</div>
<div class="a c" style="left:110px;top:955px;color:#f22">8</div>
<div class="a c" style="left:430px;top:955px;color:#f22">9</div>
<div class="a c" style="left:763px;top:955px;color:#f22">10</div>
<div class="a c" style="left:1022px;top:955px;color:#f22">11</div>
<div class="a c" style="left:1325px;top:955px;color:#f22">12</div>
<div class="a" style="left:1575px;top:955px;font-size:13px;color:#ccc">日线</div>

<!-- tab row 1 -->
<div style="position:absolute;left:0;top:971px;width:1614px;height:16px">
<b class="tb" style="left:1px;width:39px;border-right:1px solid #900">指标A</b>
<b class="tb" style="left:41px;width:31px;border-right:1px solid #900">窗口</b>
<b class="tb" style="left:73px;width:35px;border-right:1px solid #900">WOL</b>
<b class="tb" style="left:109px;width:53px;border-right:1px solid #900">双紫擒龙</b>
<b class="tb" style="left:163px;width:56px;border-right:1px solid #900">强势起爆</b>
<b class="tb" style="left:220px;width:31px;border-right:1px solid #900">均线</b>
<b class="tb" style="left:252px;width:32px;border-right:1px solid #900">擒龙</b>
<b class="tb" style="left:285px;width:56px;border-right:1px solid #900">镇店之宝</b>
<b class="tb" style="left:342px;width:54px;border-right:1px solid #900">飞碟妖龙</b>
<b class="tb" style="left:397px;width:42px;border-right:1px solid #900">主进出</b>
<b class="tb" style="left:440px;width:80px;border-right:1px solid #900">十全十美指标</b>
<b class="tb" style="left:521px;width:31px;border-right:1px solid #900">加仓</b>
<b class="tb" style="left:553px;width:31px;border-right:1px solid #900">转点</b>
<b class="tb" style="left:585px;width:37px;border-right:1px solid #900">资金2</b>
<b class="tb" style="left:623px;width:43px;border-right:1px solid #900">宁波敢</b>
<b class="tb" style="left:667px;width:30px;border-right:1px solid #900">AI龙</b>
<b class="tb" style="left:698px;width:31px;border-right:1px solid #900">顶底</b>
<b class="tb" style="left:730px;width:55px;border-right:1px solid #900">资金方向</b>
<b class="tb" style="left:786px;width:40px;border-right:1px solid #900">主控盘</b>
<b class="tb" style="left:827px;width:42px;border-right:1px solid #900">战神号</b>
<b class="tb" style="left:870px;width:56px;border-right:1px solid #900">动能二号</b>
<b class="tb" style="left:927px;width:46px;border-right:1px solid #900">飞碟妖</b>
<b class="tb" style="left:974px;width:54px;border-right:1px solid #900">财神到家</b>
<b class="tb" style="left:1029px;width:56px;border-right:1px solid #900">游资里潮</b>
<b class="tb" style="left:1086px;width:31px;border-right:1px solid #900">多空</b>
<b class="tb" style="left:1118px;width:54px;border-right:1px solid #900">冰火量能</b>
<b class="tb" style="left:1173px;width:55px;border-right:1px solid #900;color:#4ff">趋势多空</b>
<b class="tb" style="left:1229px;width:43px;border-right:1px solid #900">热力图</b>
<b class="tb" style="left:1273px;width:54px;border-right:1px solid #900">短线情绪</b>
<b class="tb" style="left:1328px;width:33px;border-right:1px solid #900">暗盘</b>
<b class="tb" style="left:1362px;width:43px;border-right:1px solid #900">全仓买</b>
<b class="tb" style="left:1406px;width:54px;border-right:1px solid #900">神针启动</b>
<b class="tb" style="left:1461px;width:15px;border-right:1px solid #900">〉</b>
<b class="tb" style="left:1480px;width:43px;border-right:1px solid #900;border-left:1px solid #900">指标B</b>
<b class="tb" style="left:1524px;width:40px;border-right:1px solid #900">模 板</b>
<b class="tb" style="left:1565px;width:24px;border-right:1px solid #900">+</b>
<b class="tb" style="left:1590px;width:24px">-</b>
</div>
<!-- tab row 2 -->
<div style="position:absolute;left:0;top:988px;width:1896px;height:16px">
<b class="tb" style="left:1px;width:38px;border-right:1px solid #900">扩展∧</b>
<b class="tb" style="left:40px;width:54px;border-right:1px solid #900">关联报价</b>
<b class="tb" style="left:95px;width:55px;border-right:1px solid #900">资金流向</b>
<b class="tb" style="left:151px;width:56px;border-right:1px solid #900;color:#cc0">综合资讯</b>
<b class="tb" style="left:208px;width:54px;border-right:1px solid #900;color:#cc0">板块资讯</b>
<b class="tb" style="left:1516px;width:48px;color:#cc0;border-left:1px solid #aa0">图文F10</b>
<b class="tb" style="left:1565px;width:48px;color:#cc0;border-left:1px solid #aa0">侧边栏《</b>
<b class="tb" style="left:1615px;width:30px;border-right:1px solid #900;color:#4ff">笔</b>
<b class="tb" style="left:1646px;width:30px;border-right:1px solid #900">价</b>
<b class="tb" style="left:1677px;width:30px;border-right:1px solid #900">细</b>
<b class="tb" style="left:1708px;width:30px;border-right:1px solid #900">势</b>
<b class="tb" style="left:1739px;width:30px;border-right:1px solid #900">联</b>
<b class="tb" style="left:1770px;width:30px;border-right:1px solid #900">值</b>
<b class="tb" style="left:1801px;width:30px;border-right:1px solid #900">主</b>
<b class="tb" style="left:1832px;width:30px;border-right:1px solid #900">逆</b>
<b class="tb" style="left:1863px;width:32px">筹</b>
</div>

<!-- right panel -->
<div class="a" style="left:1632px;top:35px;height:20px;line-height:20px;font-size:19px;color:#6ff">国瓷材料</div>
<div class="a" style="left:1712px;top:38px;font-size:14px;color:#aaa">300285</div>
<div class="a" style="left:1764px;top:32px;font-size:10px;color:#f33;line-height:12px;height:12px">R</div>
<div class="a" style="left:1761px;top:44px;font-size:10px;color:#f33;line-height:12px;height:12px">500</div>
<div class="a" style="left:1617px;top:62px;height:20px;line-height:20px;font-size:19px;font-weight:bold;color:#0e0">26.38</div>
<div class="a" style="left:1716px;top:62px;height:20px;line-height:20px;font-size:19px;font-weight:bold;color:#0e0">▼-0.24</div>
<div class="a" style="right:29px;top:62px;height:20px;line-height:20px;font-size:19px;font-weight:bold;color:#0e0">-0.90%</div>

<div class="a l" style="left:1617px;top:90px">卖五</div>
<div class="a l" style="left:1617px;top:108px">卖四</div>
<div class="a l" style="left:1617px;top:126px">卖三</div>
<div class="a l" style="left:1617px;top:145px">卖二</div>
<div class="a l" style="left:1617px;top:163px">卖一</div>
<div class="a l" style="left:1617px;top:181px">买一</div>
<div class="a l" style="left:1617px;top:199px">买二</div>
<div class="a l" style="left:1617px;top:217px">买三</div>
<div class="a l" style="left:1617px;top:235px">买四</div>
<div class="a l" style="left:1617px;top:254px">买五</div>
<div class="a v" style="right:168px;top:180px;color:#0e0">26.38</div>
<div class="a v" style="right:27px;top:180px;color:#cc0">3</div>

<div class="a l" style="left:1617px;top:275px">今开</div><div class="a v" style="right:168px;top:274px;color:#0e0">26.55</div><div class="a l" style="left:1757px;top:275px">均价</div><div class="a v" style="right:27px;top:274px;color:#0e0">26.16</div>
<div class="a l" style="left:1617px;top:293px">最高</div><div class="a v" style="right:168px;top:292px;color:#f33">26.68</div><div class="a l" style="left:1757px;top:293px">量比</div><div class="a v" style="right:27px;top:292px;color:#0e0">0.67</div>
<div class="a l" style="left:1617px;top:312px">最低</div><div class="a v" style="right:168px;top:311px;color:#0e0">25.63</div><div class="a l" style="left:1757px;top:312px">市值</div><div class="a v" style="right:27px;top:311px;color:#aaa">263.0亿</div>
<div class="a l" style="left:1617px;top:331px">现量</div><div class="a v" style="right:168px;top:330px;color:#c0c">7727</div><div class="a l" style="left:1757px;top:331px">总量</div><div class="a v" style="right:27px;top:330px;color:#aaa">459288</div>
<div class="a l" style="left:1617px;top:350px">外盘</div><div class="a v" style="right:168px;top:349px;color:#f33">217714</div><div class="a l" style="left:1757px;top:350px">内盘</div><div class="a v" style="right:27px;top:349px;color:#0e0">241574</div>

<div class="a l" style="left:1617px;top:371px">换手</div><div class="a v" style="right:168px;top:370px;color:#aaa">5.46%</div><div class="a l" style="left:1757px;top:371px">股本</div><div class="a v" style="right:27px;top:370px;color:#aaa">9.97亿</div>
<div class="a l" style="left:1617px;top:390px">净资</div><div class="a v" style="right:168px;top:389px;color:#aaa">7.03</div><div class="a l" style="left:1757px;top:390px">流通</div><div class="a v" style="right:27px;top:389px;color:#aaa">8.41亿</div>
<div class="a l" style="left:1617px;top:409px">收益㈢</div><div class="a v" style="right:168px;top:408px;color:#aaa">0.490</div><div class="a l" style="left:1757px;top:408px;font-size:14px">PE(动)</div><div class="a v" style="right:27px;top:408px;color:#aaa">40.3</div>

<div class="a l" style="left:1616px;top:432px">交易状态: 盘后连续撮合</div>
<div class="a v" style="left:1799px;top:431px;letter-spacing:.5px;color:#aaa">15:05:15</div>
<div class="a l" style="left:1617px;top:452px;font-size:16.500px">主力净额</div>
<div class="a v" style="left:1802px;top:452px;color:#0e0">-5656万</div>
<div class="a v" style="right:27px;top:452px;color:#0e0">-5%</div>

<!-- ticks -->
<div class="a v" style="left:1617px;top:474px;color:#bbb;letter-spacing:.3px">14:55</div>
<div class="a v" style="left:1617px;top:582px;color:#bbb;letter-spacing:.3px">14:56</div>
<div class="a v" style="left:1617px;top:942px;color:#bbb;letter-spacing:.3px">14:57</div>
<div class="a v" style="left:1617px;top:960px;color:#bbb;letter-spacing:.3px">15:00</div>
<div class="col" style="right:168px;top:473px;color:#0e0">26.45
26.43
26.42
26.41
26.41
26.41
26.40
26.39
26.40
26.39
26.39
26.38
26.37
26.38
26.36
26.38
26.36
26.35
26.36
26.36
26.35
26.36
26.38
26.38
26.38
26.40
26.38
26.38</div>
<div class="col" style="right:86px;top:473px;color:#cc0">37
314
75
350
438
281
<span style="color:#c0c">606</span>
76
186
100
77
318
283
161
70
132
125
289
<span style="color:#c0c">712</span>
216
273
89
72
108
207
225
87
<span style="color:#c0c">7727</span></div>
<div class="col" style="left:1851px;width:11px;top:473px;color:#0e0;text-align:center"><span style="color:#f33">B</span>
S
S
S
S
<span style="color:#f33">B</span>
S
S
<span style="color:#f33">B</span>
S
<span style="color:#f33">B</span>
S
S
<span style="color:#f33">B</span>
S
<span style="color:#f33">B</span>
S
S
<span style="color:#f33">B</span>
S
S
<span style="color:#f33">B</span>
<span style="color:#f33">B</span>
S
S
<span style="color:#f33">B</span>
S</div>
<div class="col" style="right:27px;top:473px;color:#888">18
34
14
48
76
49
81
20
41
37
14
59
45
32
23
22
35
53
58
29
27
17
7
14
34
19
6
549</div>

<!-- ticker -->
<div style="position:absolute;left:0;top:1005px;width:1896px;height:23px;background:#2c3037;overflow:hidden;font-size:12px;color:#ccc;line-height:23px;white-space:nowrap">
<span style="position:absolute;left:-2px">能消费电子市场 可穿戴腕表高端化趋势明显</span>
<span style="position:absolute;left:268px;letter-spacing:.22px">港股异动 | 中远海能(01138)年后涨超4% 委内瑞拉原油装运受干扰 短</span>
<span style="position:absolute;left:680px">现货黄金向上突破4340美元</span>
<span style="position:absolute;left:863px">强化<span class="q">“</span>背靠祖国、联通世界<span class="q">”</span>优势 香港多管齐下打造领先航空超级枢</span>
<span style="position:absolute;left:1275px;letter-spacing:-.1px">Omdia: 第三季度全球半导体行业营收环比增长14.5% 全年有望突破800</span>
<span style="position:absolute;left:1687px">IDC: 2025年前三季度全球腕戴设备市场</span>
</div>
<!-- status bar -->
<div style="position:absolute;left:0;top:1028px;width:1896px;height:22px;background:#1b1f26"></div>
<svg width="1896" height="22" style="position:absolute;left:0;top:1028px" viewBox="0 1028 1896 22">
 <g fill="none" stroke="#99a" stroke-width="1.500">
  <circle cx="12" cy="1040" r="5.500" fill="#777" stroke="#777"/>
  <circle cx="971" cy="1040" r="5.500"/><path d="M969 1043l4-6"/>
  <rect x="985" y="1033" width="11" height="14" rx="3" fill="#445" stroke="#445"/>
  <rect x="1727" y="1033" width="13" height="13" rx="2"/><path d="M1730 1037h2M1735 1037h2M1730 1042h7"/>
  <path d="M1760 1035v11M1765 1032v15" stroke-width="3"/>
  <circle cx="1793" cy="1040" r="5" stroke-dasharray="3 2"/><path d="M1791 1040h4"/>
 </g>
 <path d="M1821 1036h8v11h-8zM1819 1033l2 3M1825 1032v3M1831 1033l-2 3" fill="#eee" stroke="#eee"/>
</svg>
<div class="a g" style="left:25px;top:1032px;color:#eee">上证</div>
<div class="a g" style="left:61px;top:1032px;color:#f44">3870.28</div>
<div class="a g" style="left:132px;top:1032px;color:#f44">45.47</div>
<div class="a g" style="left:184px;top:1032px;color:#f44">1.19%</div>
<div class="a g" style="left:240px;top:1032px;color:#eee">7668亿</div>
<div class="a g" style="left:299px;top:1032px;color:#eee">深证</div>
<div class="a g" style="left:336px;top:1032px;color:#f44">13224.51</div>
<div class="a g" style="left:403px;top:1032px;color:#f44">309.84</div>
<div class="a g" style="left:457px;top:1032px;color:#f44">2.40%</div>
<div class="a g" style="left:514px;top:1032px;color:#eee">10443亿</div>
<div class="a g" style="left:574px;top:1032px;color:#eee">创业</div>
<div class="a g" style="left:610px;top:1032px;color:#f44">3175.91</div>
<div class="a g" style="left:680px;top:1032px;color:#f44">104.15</div>
<div class="a g" style="left:733px;top:1032px;color:#f44">3.39%</div>
<div class="a g" style="left:790px;top:1032px;color:#eee">4951亿</div>
<div class="a g" style="left:852px;top:1032px;color:#eee">总成交</div>
<div class="a g" style="left:903px;top:1032px;color:#eee">18345亿</div>
<div class="a" style="left:988px;top:1032px;font-size:11px;color:#ccc">3</div>
<div class="a" style="left:1001px;top:1032px;font-size:13px;color:#eee">已连接</div>
<div class="a" style="left:1845px;top:1032px;font-size:13px;color:#d0b080">15:18:20</div>

<!-- sidebar labels -->
<div class="a" style="left:1900px;top:219px;font-size:10px;color:#1a4fc0;width:17px;text-align:center">F10</div>
<div class="a" style="left:1900px;top:288px;font-size:10px;color:#1a4fc0;width:17px;text-align:center">F12</div>
<div class="a" style="left:1898px;top:387px;font-size:10px;color:#1a3fb0;font-weight:bold;width:20px;text-align:center">RSI</div>
<div class="a" style="left:1900px;top:487px;font-size:10px;color:#1a4fc0;width:17px;text-align:center">FS</div>
<div class="a" style="left:1897px;top:533px;font-size:12px;color:#1a3f9a;width:22px;text-align:center">1</div>
<div class="a" style="left:1897px;top:556px;font-size:12px;color:#1a3f9a;width:22px;text-align:center">5</div>
<div class="a" style="left:1897px;top:579px;font-size:12px;color:#1a3f9a;width:22px;text-align:center">15</div>
<div class="a" style="left:1897px;top:602px;font-size:12px;color:#1a3f9a;width:22px;text-align:center">30</div>
<div class="a" style="left:1897px;top:625px;font-size:12px;color:#1a3f9a;width:22px;text-align:center">60</div>
<div class="a" style="left:1897px;top:650px;font-size:13px;color:#1a3f9a;width:22px;text-align:center">日</div>
<div class="a" style="left:1897px;top:671px;font-size:13px;color:#1a3f9a;width:22px;text-align:center">周</div>
<div class="a" style="left:1897px;top:694px;font-size:13px;color:#1a3f9a;width:22px;text-align:center">月</div>
<div class="a" style="left:1897px;top:717px;font-size:12px;color:#1a3f9a;width:22px;text-align:center">N</div>
<div class="a" style="left:1897px;top:740px;font-size:13px;color:#1a3f9a;width:22px;text-align:center">多</div>
<div class="a" style="left:1897px;top:764px;font-size:13px;color:#1a3f9a;width:22px;text-align:center">季</div>
<div class="a" style="left:1897px;top:787px;font-size:13px;color:#1a3f9a;width:22px;text-align:center">年</div>
</div>
</body>
</html>
